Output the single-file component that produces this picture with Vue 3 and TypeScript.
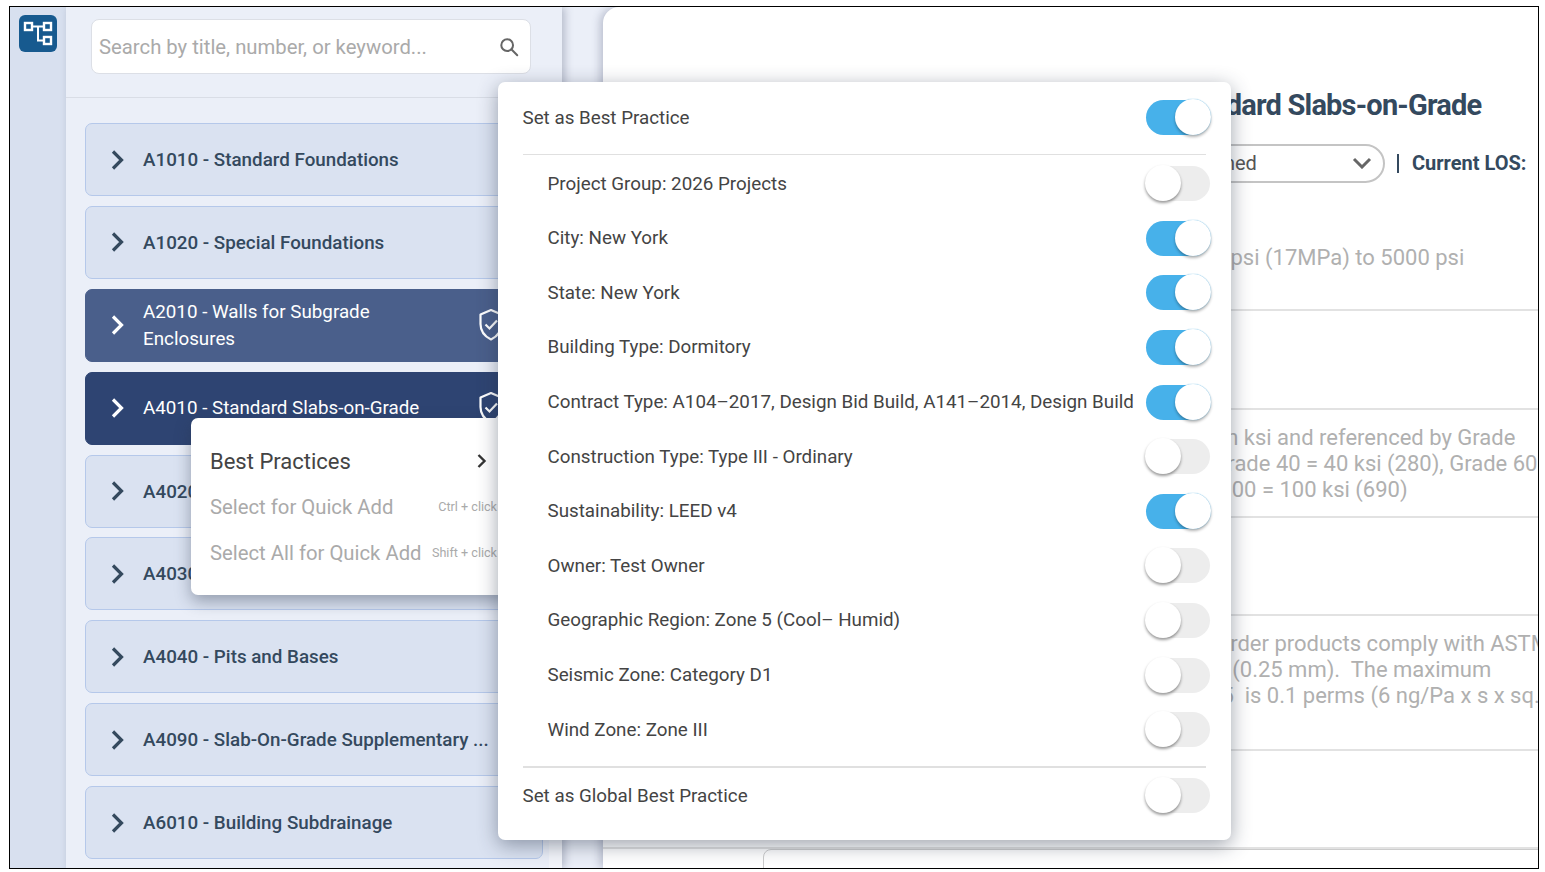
<template>
  <div class="frame">
    <aside class="rail">
      <div class="logo">
        <svg width="38" height="38" viewBox="0 0 38 38" fill="none" stroke="#fff" stroke-width="2.4">
          <rect x="6" y="8" width="7" height="7" />
          <rect x="25" y="8" width="7" height="7" />
          <rect x="25" y="22" width="7" height="7" />
          <path d="M13 11.5h12M19 11.5v14h6" stroke-width="2" />
        </svg>
      </div>
    </aside>

    <section class="sidebar">
      <div class="search-wrap">
        <div class="search-box">
          <input class="search-input" type="text" placeholder="Search by title, number, or keyword..." />
          <svg class="search-icon" width="22" height="22" viewBox="0 0 24 24" fill="none" stroke="#666" stroke-width="2.2">
            <circle cx="10" cy="10" r="6.4" />
            <path d="M14.8 14.8 21 21" stroke-linecap="round" />
          </svg>
        </div>
      </div>
      <div class="list-area">
        <div class="card-list">
          <div
            v-for="item in sections"
            :key="item.code"
            class="card"
            :class="item.state"
          >
            <svg class="chevron" width="14" height="20" viewBox="0 0 14 20" fill="none" stroke="currentColor" stroke-width="3.2">
              <path d="M2 1.500 10.500 10 2 18.500" />
            </svg>
            <span class="card-title">{{ item.code }} - {{ item.title }}</span>
            <svg v-if="item.state" class="shield" width="26" height="34" viewBox="0 0 26 34" fill="none" stroke="#fff" stroke-width="2.2">
              <path d="M13 2 23.500 6.500V16c0 7.500-4.500 12.500-10.500 15.500C7 28.500 2.500 23.500 2.500 16V6.500Z" stroke-linejoin="round" />
              <path d="M7.500 16.500 11.500 20.500 19 12.500" />
            </svg>
          </div>
        </div>
        <div class="track"></div>
      </div>
    </section>

    <div class="strip"></div>

    <main class="content">
      <h1 class="page-title">A4010 - Standard Slabs-on-Grade</h1>
      <div class="los-row">
        <div class="pill">
          <span>Not Assigned</span>
          <svg width="20" height="12" viewBox="0 0 20 12" fill="none" stroke="#666" stroke-width="3">
            <path d="M2 2 10 10 18 2" />
          </svg>
        </div>
        <span class="bar"></span>
        <strong class="los-label">Current LOS:</strong>
      </div>
      <div class="rows">
        <div v-for="(row, i) in rows" :key="i" class="row" :class="row.size">
          <div
            v-for="line in row.lines"
            :key="line.text"
            class="line"
            :style="{ marginLeft: line.shift + 'px' }"
          >{{ line.text }}</div>
        </div>
      </div>
      <div class="bottom-card"></div>
    </main>

    <div class="context-menu">
      <div class="menu-item active">
        <span>Best Practices</span>
        <svg width="12" height="16" viewBox="0 0 12 16" fill="none" stroke="#333" stroke-width="2.4">
          <path d="M2.500 2 8.500 8 2.500 14" />
        </svg>
      </div>
      <div class="menu-item">
        <span>Select for Quick Add</span>
        <span class="shortcut">Ctrl + click</span>
      </div>
      <div class="menu-item">
        <span>Select All for Quick Add</span>
        <span class="shortcut">Shift + click</span>
      </div>
    </div>

    <div class="popover">
      <div class="pop-head">
        <span>Set as Best Practice</span>
        <span class="toggle" :class="{ on: bestPractice }" @click="bestPractice = !bestPractice"><i class="knob"></i></span>
      </div>
      <div class="pop-list">
        <div v-for="opt in options" :key="opt.label" class="pop-row">
          <span>{{ opt.label }}</span>
          <span class="toggle" :class="{ on: opt.on }" @click="opt.on = !opt.on"><i class="knob"></i></span>
        </div>
      </div>
      <div class="pop-foot">
        <span>Set as Global Best Practice</span>
        <span class="toggle" :class="{ on: globalPractice }" @click="globalPractice = !globalPractice"><i class="knob"></i></span>
      </div>
    </div>
  </div>
</template>

<script setup lang="ts">
import { reactive, ref } from 'vue'

interface Section {
  code: string
  title: string
  state: string
}

interface Line {
  text: string
  shift: number
}

const sections: Section[] = [
  { code: 'A1010', title: 'Standard Foundations', state: '' },
  { code: 'A1020', title: 'Special Foundations', state: '' },
  { code: 'A2010', title: 'Walls for Subgrade Enclosures', state: 'hover' },
  { code: 'A4010', title: 'Standard Slabs-on-Grade', state: 'selected' },
  { code: 'A4020', title: 'Structural Slabs-on-Grade', state: '' },
  { code: 'A4030', title: 'Slab Trenches', state: '' },
  { code: 'A4040', title: 'Pits and Bases', state: '' },
  { code: 'A4090', title: 'Slab-On-Grade Supplementary ...', state: '' },
  { code: 'A6010', title: 'Building Subdrainage', state: '' },
]

const rows: { size: string; lines: Line[] }[] = [
  {
    size: 'row-short',
    lines: [{ text: 'Concrete compressive strength runs from 2500 psi (17MPa) to 5000 psi', shift: 1 }],
  },
  { size: '', lines: [] },
  {
    size: 'row-mid',
    lines: [
      { text: 'Reinforcing steel yield strengths are expressed in ksi and referenced by Grade', shift: -3 },
      { text: 'the yield number on the bar designation, where Grade 40 = 40 ksi (280), Grade 60', shift: -11 },
      { text: '= 60 ksi (420), Grade 75 = 75 ksi (520), Grade 100 = 100 ksi (690)', shift: 13 },
    ],
  },
  { size: '', lines: [] },
  {
    size: 'row-tall',
    lines: [
      { text: 'Ensure that all of the new under-slab vapor retarder products comply with ASTM E1745, Class A', shift: 8 },
      { text: 'and should have a minimum thickness of 10 mil (0.25 mm).  The maximum', shift: -2 },
      { text: 'water vapor permeance tested per ASTM E1745  is 0.1 perms (6 ng/Pa x s x sq.m)', shift: 4 },
    ],
  },
  { size: '', lines: [] },
]

const bestPractice = ref(true)
const globalPractice = ref(false)

const options = reactive([
  { label: 'Project Group: 2026 Projects', on: false },
  { label: 'City: New York', on: true },
  { label: 'State: New York', on: true },
  { label: 'Building Type: Dormitory', on: true },
  { label: 'Contract Type: A104–2017, Design Bid Build, A141–2014, Design Build', on: true },
  { label: 'Construction Type: Type III - Ordinary', on: false },
  { label: 'Sustainability: LEED v4', on: true },
  { label: 'Owner: Test Owner', on: false },
  { label: 'Geographic Region: Zone 5 (Cool– Humid)', on: false },
  { label: 'Seismic Zone: Category D1', on: false },
  { label: 'Wind Zone: Zone III', on: false },
])
</script>

<style>
html,
body {
  background: #fff;
}
</style>

<style scoped>
.frame {
  position: relative;
  box-sizing: border-box;
  width: 1530px;
  height: 863px;
  margin: 6px 0 0 9px;
  border: 1px solid #000;
  display: flex;
  overflow: hidden;
  background: #ebeff8;
  font-family: Roboto, "Noto Sans", sans-serif;
  color: #34495e;
}

.rail {
  width: 56px;
  flex: none;
  background: #d8e0ef;
  padding: 8px 0 0 9px;
  box-sizing: border-box;
}

.logo {
  width: 38px;
  height: 37px;
  border-radius: 6px;
  background: #175a8f;
}

.sidebar {
  width: 496px;
  flex: none;
  display: flex;
  flex-direction: column;
  background: #ebeff8;
  box-shadow: 3px 0 8px rgba(60, 70, 100, 0.3);
  z-index: 1;
}

.search-wrap {
  height: 91px;
  box-sizing: border-box;
  padding: 12px 31px 0 25px;
  border-bottom: 1px solid #d9dde6;
}

.search-box {
  height: 55px;
  box-sizing: border-box;
  border: 1px solid #dcdfe6;
  border-radius: 8px;
  background: #fff;
  display: flex;
  align-items: center;
  padding: 0 10px 0 7px;
}

.search-input {
  flex: 1;
  min-width: 0;
  border: 0;
  outline: 0;
  background: transparent;
  padding: 0;
  font-family: inherit;
  font-size: 20.3px;
}

.search-input::placeholder {
  color: #aaa;
  opacity: 1;
}

.list-area {
  flex: 1;
  display: flex;
  min-height: 0;
}

.card-list {
  flex: 1;
  display: flex;
  flex-direction: column;
  gap: 9.9px;
  padding: 25px 6px 0 19px;
}

.track {
  width: 13px;
  background: #f3f5fa;
}

.card {
  box-sizing: border-box;
  height: 73px;
  flex: none;
  display: flex;
  align-items: center;
  padding: 0 38px 0 25px;
  border: 1px solid #b5c8ea;
  border-radius: 7px;
  background: #dae2f1;
  color: #34495e;
}

.card.hover {
  background: #4a5f8b;
  border-color: #4a5f8b;
  color: #fff;
}

.card.selected {
  background: #2e4472;
  border-color: #2e4472;
  color: #fff;
}

.chevron {
  flex: none;
}

.card-title {
  flex: 1;
  margin-left: 18px;
  padding-top: 2px;
  font-size: 18.8px;
  font-weight: 500;
  line-height: 27px;
  white-space: nowrap;
}

.hover .card-title,
.selected .card-title {
  white-space: normal;
  margin-right: 12px;
  font-weight: 400;
}

.selected .card-title {
  padding-top: 0;
}

.shield {
  flex: none;
}

.strip {
  width: 41px;
  flex: none;
}

.content {
  flex: 1;
  min-width: 0;
  background: #fff;
  border-top-left-radius: 16px;
  box-shadow: -3px 0 8px rgba(60, 70, 100, 0.28);
  overflow: hidden;
  padding-left: 160px;
  z-index: 1;
}

.page-title {
  margin: 79px 0 0 301px;
  font-size: 29px;
  letter-spacing: -0.8px;
  line-height: 38px;
  font-weight: 700;
  white-space: nowrap;
  color: #34495e;
}

.los-row {
  display: flex;
  align-items: center;
  margin: 20px 0 0 320px;
  height: 39px;
}

.pill {
  box-sizing: border-box;
  width: 302px;
  height: 39px;
  flex: none;
  display: flex;
  align-items: center;
  justify-content: space-between;
  padding: 0 11px 2px 52px;
  border: 2px solid #c4c4c4;
  border-radius: 20px;
  font-size: 20px;
  color: #555;
}

.bar {
  width: 2px;
  height: 19px;
  margin-left: 12px;
  background: #34495e;
}

.los-label {
  margin: -2px 0 0 13px;
  font-size: 20px;
  white-space: nowrap;
}

.rows {
  margin: 47px 0 0 -160px;
}

.row {
  box-sizing: border-box;
  height: 98.5px;
  padding: 15px 0 0 160px;
  border-bottom: 2px solid #e2e2e2;
}

.row:last-child {
  height: 98px;
}

.row-short {
  height: 81px;
}

.row-mid {
  height: 108px;
}

.row-tall {
  height: 135px;
}

.line {
  font-size: 22px;
  line-height: 26px;
  white-space: pre;
  color: #b0b0b0;
}

.bottom-card {
  height: 60px;
  margin-right: -20px;
  border: 1px solid #ccc;
  border-radius: 8px;
}

.context-menu {
  position: absolute;
  left: 181px;
  top: 411px;
  box-sizing: border-box;
  width: 319px;
  height: 177px;
  padding: 20px 13px 0 19px;
  border-radius: 7px;
  background: #fff;
  box-shadow: 0 6px 16px rgba(40, 50, 70, 0.4);
  z-index: 2;
}

.menu-item {
  height: 46px;
  display: flex;
  align-items: center;
  justify-content: space-between;
  font-size: 20.3px;
  color: #aaa;
  white-space: nowrap;
}

.menu-item.active {
  font-size: 22px;
  color: #444;
  padding-right: 9px;
}

.shortcut {
  margin-top: -2px;
  font-size: 12.6px;
}

.popover {
  position: absolute;
  left: 488px;
  top: 75px;
  box-sizing: border-box;
  width: 733px;
  height: 758px;
  padding: 0 25px 0 24.5px;
  border-radius: 7px;
  background: #fff;
  box-shadow: 0 5px 20px rgba(40, 50, 70, 0.45);
  z-index: 3;
  font-size: 18.8px;
  color: #444;
}

.pop-head {
  height: 73px;
  display: flex;
  align-items: center;
  justify-content: space-between;
  padding-bottom: 1px;
  border-bottom: 1px solid #e0e0e0;
  box-sizing: border-box;
}

.pop-list {
  border-bottom: 2px solid #e0e0e0;
  height: 613px;
  padding-top: 1.4px;
  box-sizing: border-box;
}

.pop-row {
  height: 54.6px;
  display: flex;
  align-items: center;
  justify-content: space-between;
  padding-left: 25px;
  white-space: nowrap;
}

.pop-foot {
  height: 55px;
  display: flex;
  align-items: center;
  justify-content: space-between;
}

.toggle {
  position: relative;
  display: block;
  width: 64px;
  height: 35px;
  flex: none;
  border-radius: 18px;
  background: #ededed;
  cursor: pointer;
  margin-right: -4px;
}

.toggle.on {
  background: #47b1ea;
}

.knob {
  position: absolute;
  left: -1px;
  top: -1px;
  width: 36px;
  height: 36px;
  border-radius: 50%;
  background: #fff;
  box-shadow: 0 2px 3px rgba(0, 0, 0, 0.4);
}

.toggle.on .knob {
  left: 28.5px;
  box-shadow: 0 2px 3px rgba(0, 0, 0, 0.3), 0 0 1px #47b1ea;
}
</style>
